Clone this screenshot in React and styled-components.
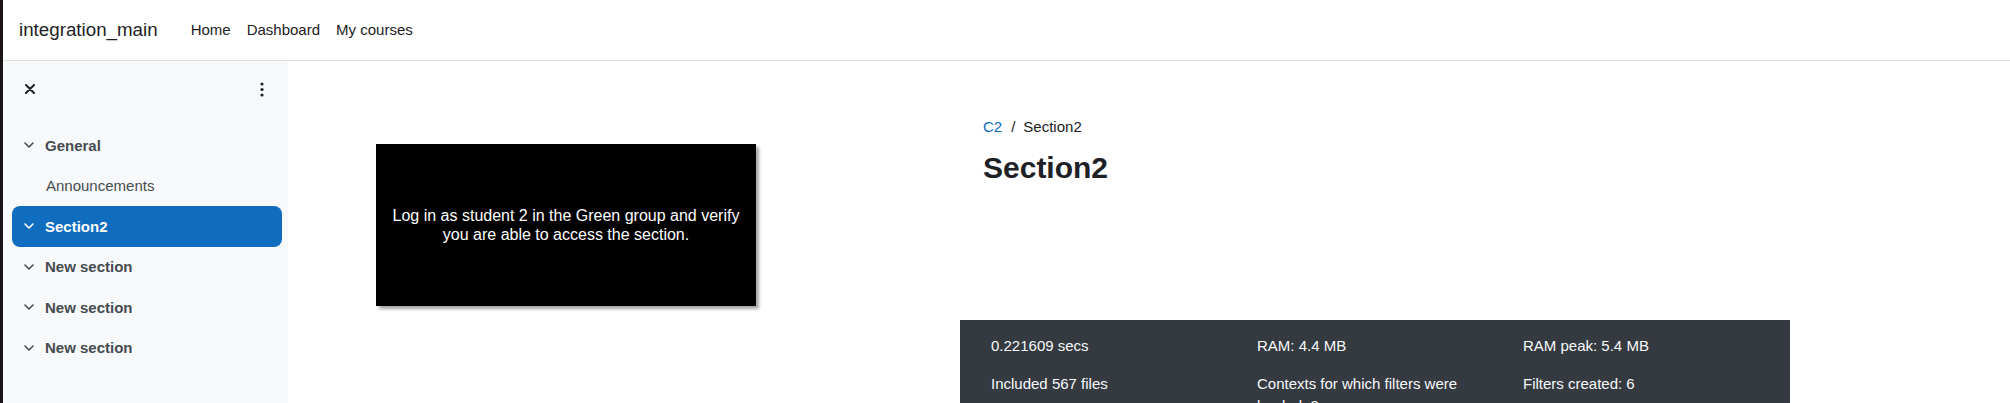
import React from 'react';
import styled, { createGlobalStyle } from 'styled-components';

const GlobalStyle = createGlobalStyle`
  html, body {
    margin: 0;
    padding: 0;
    background: #fff;
    font-family: 'Liberation Sans', Arial, sans-serif;
    color: #1d2125;
  }
  * { box-sizing: border-box; }
`;

const Page = styled.div`
  display: flex;
  height: 100vh;
  overflow: hidden;
`;

const Stripe = styled.div`
  width: 3px;
  flex: none;
  background: #1b1418;
`;

const Shell = styled.div`
  flex: 1;
  display: flex;
  flex-direction: column;
  min-width: 0;
`;

const Navbar = styled.header`
  height: 61px;
  flex: none;
  display: flex;
  align-items: center;
  padding: 0 0 1px 16px;
  border-bottom: 1px solid #dee2e6;
`;

const Brand = styled.div`
  font-size: 18.75px;
  color: #1d2125;
  margin-right: 25px;
`;

const NavLink = styled.a`
  font-size: 15px;
  color: #1d2125;
  padding: 0 8px;
  text-decoration: none;
`;

const Body = styled.div`
  flex: 1;
  display: flex;
  min-height: 0;
`;

const Drawer = styled.aside`
  width: 285px;
  flex: none;
  background: #f8f9fa;
`;

const DrawerHeader = styled.div`
  height: 56px;
  display: flex;
  align-items: center;
  justify-content: space-between;
  padding: 0 8px 0 9px;
  margin-bottom: 8px;
`;

const IconButton = styled.button`
  width: 36px;
  height: 36px;
  border: none;
  background: transparent;
  display: flex;
  align-items: center;
  justify-content: center;
  padding: 0;
  color: #1d2125;
`;

const IndexList = styled.div`
  padding: 0 6px 0 9px;
`;

const SectionRow = styled.div`
  height: 40.5px;
  display: flex;
  align-items: center;
  border-radius: 8px;
  font-size: 15px;
  font-weight: bold;
  color: ${p => (p.$active ? '#fff' : '#464b50')};
  background: ${p => (p.$active ? '#0f6cbf' : 'transparent')};
  padding-left: 12px;
  gap: 11px;
`;

const ItemRow = styled.div`
  height: 40.5px;
  display: flex;
  align-items: center;
  font-size: 15px;
  color: #464b50;
  padding-left: 34px;
`;

const Main = styled.main`
  flex: 1;
  display: flex;
`;

const MediaCol = styled.div`
  width: 672px;
  flex: none;
  padding: 83px 0 0 88px;
`;

const Notice = styled.div`
  width: 380px;
  height: 162px;
  background: #000;
  color: #fff;
  font-size: 16px;
  line-height: 19px;
  text-align: center;
  display: flex;
  align-items: center;
  justify-content: center;
  padding: 0 10px;
  box-shadow: 3px 3px 3px rgba(0, 0, 0, 0.35);
`;

const ContentCol = styled.div`
  width: 830px;
  flex: none;
  display: flex;
  flex-direction: column;
  padding-top: 55px;
`;

const Breadcrumb = styled.nav`
  display: flex;
  align-items: center;
  font-size: 15px;
  line-height: 22.5px;
  padding-left: 23px;
  color: #1d2125;
`;

const Crumb = styled.a`
  color: #0f6cbf;
  text-decoration: none;
`;

const Divider = styled.span`
  padding: 0 8px 0 9px;
`;

const Heading = styled.h1`
  font-size: 30px;
  line-height: 36px;
  font-weight: bold;
  margin: 11px 0 0;
  padding-left: 23px;
  color: #1d2125;
`;

const Footer = styled.footer`
  margin-top: 134px;
  background: #343a40;
  color: #f8f9fa;
  padding: 15px 16px;
  display: grid;
  grid-template-columns: repeat(3, 266px);
  row-gap: 15.5px;
`;

const Stat = styled.div`
  font-size: 15px;
  line-height: 22.5px;
  padding: 0 15px;
`;

const Chevron = ({ color }) => (
  <svg width="10" height="6" viewBox="0 0 10 6" fill="none">
    <path d="M1 1l4 4 4-4" stroke={color} strokeWidth="1.6" strokeLinecap="round" strokeLinejoin="round" />
  </svg>
);

const sections = [
  { name: 'General', items: ['Announcements'] },
  { name: 'Section2', active: true, items: [] },
  { name: 'New section', items: [] },
  { name: 'New section', items: [] },
  { name: 'New section', items: [] },
];

const stats = [
  '0.221609 secs',
  'RAM: 4.4 MB',
  'RAM peak: 5.4 MB',
  'Included 567 files',
  'Contexts for which filters were loaded: 3',
  'Filters created: 6',
];

export default function App() {
  return (
    <Page>
      <GlobalStyle />
      <Stripe />
      <Shell>
        <Navbar>
          <Brand>integration_main</Brand>
          <NavLink>Home</NavLink>
          <NavLink>Dashboard</NavLink>
          <NavLink>My courses</NavLink>
        </Navbar>
        <Body>
          <Drawer>
            <DrawerHeader>
              <IconButton aria-label="Close course index">
                <svg width="10" height="10" viewBox="0 0 10 10">
                  <path d="M1 1l8 8M9 1l-8 8" stroke="#1d2125" strokeWidth="2" strokeLinecap="round" />
                </svg>
              </IconButton>
              <IconButton aria-label="Course index options">
                <svg width="4" height="15" viewBox="0 0 4 15">
                  <circle cx="2" cy="2" r="1.6" fill="#1d2125" />
                  <circle cx="2" cy="7.5" r="1.6" fill="#1d2125" />
                  <circle cx="2" cy="13" r="1.6" fill="#1d2125" />
                </svg>
              </IconButton>
            </DrawerHeader>
            <IndexList>
              {sections.map((s, i) => (
                <React.Fragment key={i}>
                  <SectionRow $active={s.active}>
                    <Chevron color={s.active ? '#fff' : '#464b50'} />
                    {s.name}
                  </SectionRow>
                  {s.items.map(item => (
                    <ItemRow key={item}>{item}</ItemRow>
                  ))}
                </React.Fragment>
              ))}
            </IndexList>
          </Drawer>
          <Main>
            <MediaCol>
              <Notice>
                Log in as student 2 in the Green group and verify you are able to access the section.
              </Notice>
            </MediaCol>
            <ContentCol>
              <Breadcrumb>
                <Crumb>C2</Crumb>
                <Divider>/</Divider>
                <span>Section2</span>
              </Breadcrumb>
              <Heading>Section2</Heading>
              <Footer>
                {stats.map(s => (
                  <Stat key={s}>{s}</Stat>
                ))}
              </Footer>
            </ContentCol>
          </Main>
        </Body>
      </Shell>
    </Page>
  );
}
